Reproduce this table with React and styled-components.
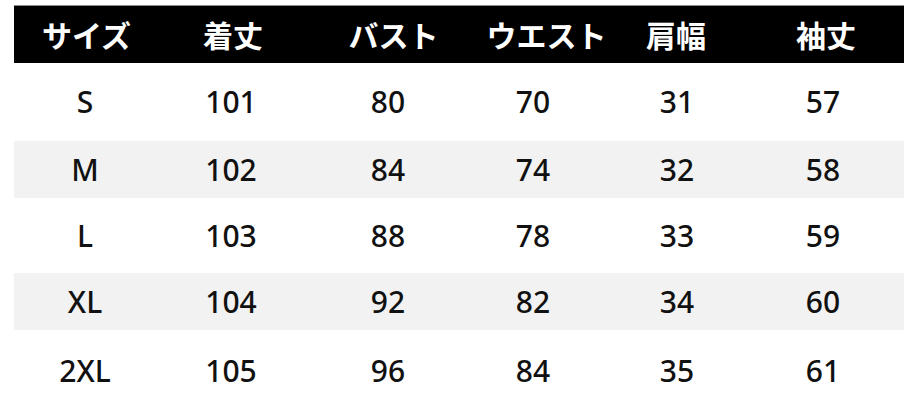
import React from 'react';
import styled, { createGlobalStyle } from 'styled-components';

const headers = ['サイズ', '着丈', 'バスト', 'ウエスト', '肩幅', '袖丈'];

const rows = [
  { size: 'S', values: [101, 80, 70, 31, 57], height: 78 },
  { size: 'M', values: [102, 84, 74, 32, 58], height: 57, shaded: true },
  { size: 'L', values: [103, 88, 78, 33, 59], height: 75 },
  { size: 'XL', values: [104, 92, 82, 34, 60], height: 57, shaded: true },
  { size: '2XL', values: [105, 96, 84, 35, 61], height: 81 },
];

const GlobalStyle = createGlobalStyle`
  html, body {
    margin: 0;
    padding: 0;
    background: #ffffff;
  }
`;

const Page = styled.div`
  width: 907px;
  height: 418px;
  overflow: hidden;
  padding: 5px 0 0 14px;
  box-sizing: border-box;
`;

const Table = styled.div`
  width: 890px;
  display: flex;
  flex-direction: column;
`;

const HeaderRow = styled.div`
  display: grid;
  grid-template-columns: 145px 148px 173px 133px 126px 174px;
  align-items: center;
  height: 57px;
  background: #000000;
  border-top: 1px solid #8a8a8a;
`;

const HeaderCell = styled.div`
  text-align: center;
  color: #ffffff;
  font-family: "Noto Sans CJK JP", "Noto Sans", sans-serif;
  font-weight: 700;
  font-size: 30px;
  line-height: 1;
  white-space: nowrap;
  margin-top: -2px;
`;

const BodyRow = styled.div`
  display: grid;
  grid-template-columns: 142px 150px 164px 126px 162px 130px;
  align-items: center;
  height: ${p => p.$height}px;
  background: ${p => (p.$shaded ? '#f2f2f2' : '#ffffff')};
`;

const Cell = styled.div`
  text-align: center;
  color: #111111;
  font-family: "Noto Sans", "Open Sans", sans-serif;
  font-weight: 500;
  font-size: 30px;
  line-height: 1;
`;

export default function App() {
  return (
    <>
      <GlobalStyle />
      <Page>
        <Table>
          <HeaderRow>
            {headers.map(h => (
              <HeaderCell key={h}>{h}</HeaderCell>
            ))}
          </HeaderRow>
          {rows.map(r => (
            <BodyRow key={r.size} $height={r.height} $shaded={r.shaded}>
              <Cell>{r.size}</Cell>
              {r.values.map((v, i) => (
                <Cell key={i}>{v}</Cell>
              ))}
            </BodyRow>
          ))}
        </Table>
      </Page>
    </>
  );
}
